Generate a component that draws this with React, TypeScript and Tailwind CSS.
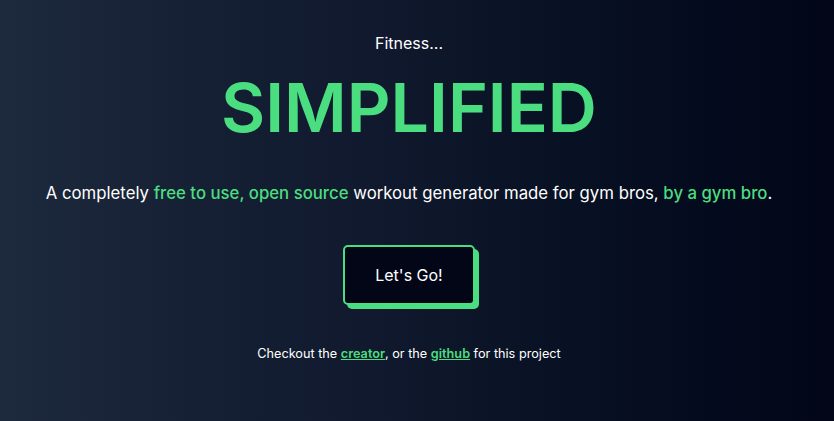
export default function App() {
  return (
    <main
      className="min-h-screen w-full bg-gradient-to-r from-slate-800 via-slate-900 to-slate-950 text-white flex flex-col items-center text-center pl-2 pr-[24px]"
      style={{ fontFamily: 'Inter, "Noto Sans", sans-serif' }}
    >
      <div className="flex flex-col items-center pt-[31px]">
        <p className="text-base leading-6">Fitness...</p>
        <h1 className="mt-[12px] text-[68px] leading-[80px] font-semibold text-[#4ade80]">
          SIMPLIFIED
        </h1>
        <p className="mt-[32px] text-[16.75px] leading-7">
          A completely <span className="text-[#4ade80] font-medium">free to use, open source</span> workout
          generator made for gym bros, <span className="text-[#4ade80] font-medium">by a gym bro</span>.
        </p>
        <button className="mt-[38px] w-[132px] h-[60px] rounded-[5px] border-2 border-[#4ade80] bg-[#020617] text-white text-base shadow-[4px_4px_0_0_#4ade80]">
          Let&apos;s Go!
        </button>
        <p className="mt-[41px] text-[12.7px] leading-4">
          Checkout the{' '}
          <a href="#" className="text-[#4ade80] font-semibold underline">creator</a>, or the{' '}
          <a href="#" className="text-[#4ade80] font-semibold underline">github</a> for this project
        </p>
      </div>
    </main>
  )
}
